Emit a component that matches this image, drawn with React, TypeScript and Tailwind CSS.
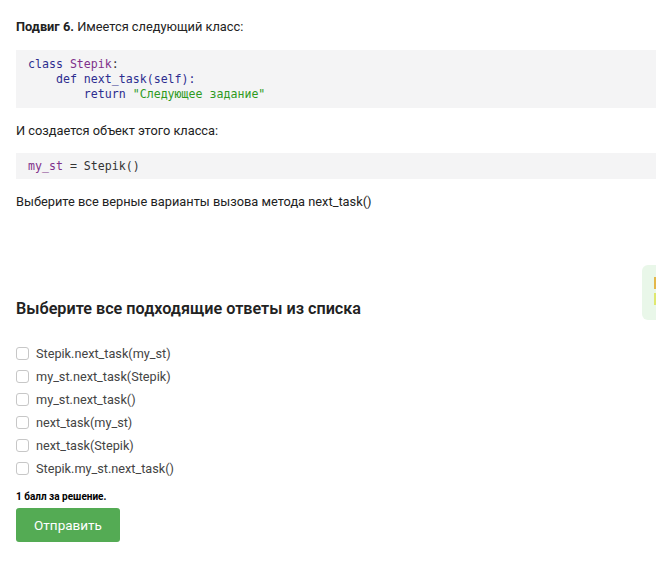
const options = [
  "Stepik.next_task(my_st)",
  "my_st.next_task(Stepik)",
  "my_st.next_task()",
  "next_task(my_st)",
  "next_task(Stepik)",
  "Stepik.my_st.next_task()",
];

const mono = "font-['DejaVu_Sans_Mono',monospace] text-[11.6px] leading-[15px]";

export default function App() {
  return (
    <div className="relative min-h-[569px] w-[656px] overflow-hidden bg-white font-['Roboto',sans-serif] text-[12.8px] text-[#222]">
      {/* side hint, clipped by the window edge */}
      <div className="absolute left-[642px] top-[265px] flex h-[55px] w-[40px] flex-col gap-[4px] rounded-[6px] bg-[#e9f7e9] pl-[12px] pt-[12px]">
        <span className="h-[12px] w-[4px] bg-[#e3b74a]" />
        <span className="h-[12px] w-[4px] bg-[#dfe870]" />
      </div>

      <div className="pl-4 pt-[18px]">
        <p className="leading-[18px]">
          <b className="font-bold">Подвиг 6.</b> Имеется следующий класс:
        </p>

        <pre className={`mt-[14px] bg-[#f4f4f5] pb-[6px] pt-[7px] pl-3 ${mono}`}>
          <span className="text-[#2d2d8f]">class</span>{" "}
          <span className="text-[#80308a]">Stepik</span>
          <span className="text-[#333]">:</span>
          {"\n    "}
          <span className="text-[#2d2d8f]">def</span>{" "}
          <span className="text-[#2d2d8f]">next_task(self):</span>
          {"\n        "}
          <span className="text-[#2d2d8f]">return</span>{" "}
          <span className="text-[#2e9a1e]">"Следующее задание"</span>
        </pre>

        <p className="mt-[14px] leading-[18px]">И создается объект этого класса:</p>

        <pre className={`mt-[13px] bg-[#f4f4f5] py-[5.5px] pl-3 ${mono}`}>
          <span className="text-[#80308a]">my_st</span>
          <span className="text-[#333]"> = Stepik()</span>
        </pre>

        <p className="mt-[14px] leading-[18px]">Выберите все верные варианты вызова метода next_task()</p>

        <h2 className="mt-[86px] text-[16.2px] font-semibold leading-[24px] text-[#222]">
          Выберите все подходящие ответы из списка
        </h2>

        <div className="mt-[21px] flex flex-col">
          {options.map((o) => (
            <label key={o} className="flex h-[23px] items-center gap-[7px]">
              <span className="h-[13px] w-[13px] rounded-[3px] border border-[#c7c7c7] bg-white" />
              <span className="text-[12.7px] text-[#444]">{o}</span>
            </label>
          ))}
        </div>

        <p className="mt-[10px] text-[10px] font-bold leading-[14px] text-black">1 балл за решение.</p>

        <button className="mt-[4px] h-[34px] w-[104px] rounded-[3px] bg-[#54ab54] text-[13.5px] text-white">
          Отправить
        </button>
      </div>
    </div>
  );
}
